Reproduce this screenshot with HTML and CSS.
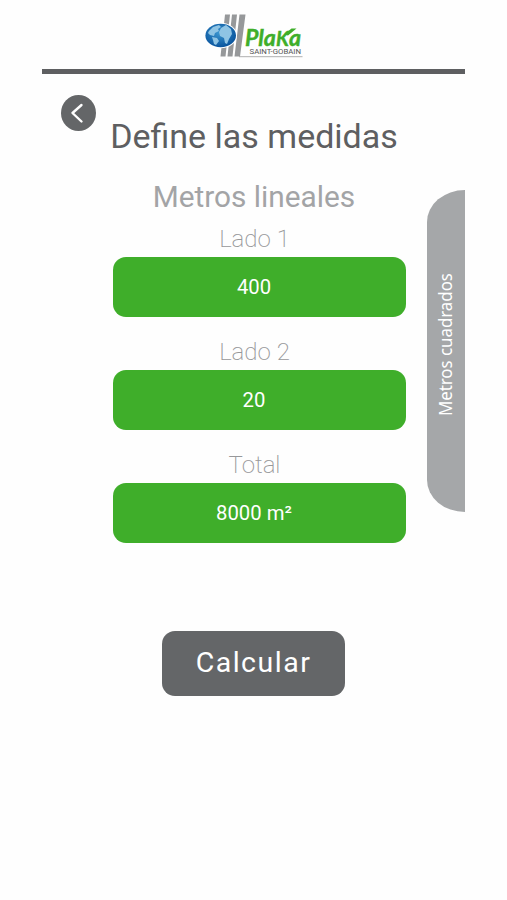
FILE: index.html
```
<!DOCTYPE html>
<html lang="es">
<head>
    <meta charset="UTF-8">
    <meta name="viewport" content="width=device-width, initial-scale=1.0">
    <title>Define las medidas</title>
    <link rel="stylesheet" href="styles.css">
</head>
<body>
<div class="app">
    <header class="header">
        <svg class="logo" width="100" height="46" viewBox="0 0 100 46">
            <defs>
                <radialGradient id="globe" cx="45%" cy="40%" r="60%">
                    <stop offset="0" stop-color="#3b95cf"/>
                    <stop offset="1" stop-color="#09549d"/>
                </radialGradient>
            </defs>
            <path class="bar" d="M20 1.5h5l-4.5 42h-5zM27 1.5h5l-4.5 42h-5zM34.5 1.5h6l-5.5 42h-5.500z"/>
            <ellipse cx="15.7" cy="22.5" rx="16.3" ry="12.8" fill="#fff"/>
            <ellipse cx="15.7" cy="22.5" rx="15.3" ry="11.8" fill="url(#globe)"/>
            <path class="land" d="M4 18l4-4 6-2 2 2-3 2 1 2-4 2-1 3-4-1-2-2zM7 24l5 1 2 3-3 4-2-1-1-4zM16 15l5-3 5 4 1 5-3 5-2 5-2-1-1-5-4-2-1-4z"/>
            <text class="logo-name" x="40" y="32.5" textLength="56" lengthAdjust="spacingAndGlyphs">Pla<tspan class="logo-k">K</tspan>a</text>
            <path d="M79 21.5l7.500-6h5l-8.500 7z" fill="#3fae2a"/>
            <text class="logo-sub" x="44.5" y="41.3" textLength="51.5" lengthAdjust="spacingAndGlyphs">SAINT-GOBAIN</text>
            <path d="M34 43.7h63.5" stroke="#999" stroke-width=".8"/>
        </svg>
    </header>

    <main class="content">
        <button class="back-btn" aria-label="Volver">
            <svg width="35" height="36" viewBox="0 0 35 36">
                <path d="M20.5 10l-9 8 9 8.5" fill="none" stroke="#fff" stroke-width="2.4" stroke-linecap="round" stroke-linejoin="round"/>
            </svg>
        </button>

        <!-- Formulario de medidas -->
        <div class="form">
            <h1>Define las medidas</h1>
            <h2>Metros lineales</h2>
            <div class="form-group">
                <label>Lado 1</label>
                <div class="field">400</div>
            </div>
            <div class="form-group">
                <label>Lado 2</label>
                <div class="field">20</div>
            </div>
            <div class="form-group">
                <label>Total</label>
                <div class="field">8000 m²</div>
            </div>
            <button class="calc-btn">Calcular</button>
        </div>

        <!-- Cambio de unidad -->
        <div class="tab"><span>Metros cuadrados</span></div>
    </main>
</div>
</body>
</html>
```
FILE: styles.css
```
body {
    font-family: Roboto, "Liberation Sans", sans-serif;
    margin: 0;
    background-color: #fefefe;
}
.app {
    width: 423px;
    margin-left: 42px;
}
.header {
    box-sizing: border-box;
    height: 74px;
    padding: 13px 0 0 163px;
    border-bottom: 5px solid #5e5f61;
}
.logo {
    display: block;
}
.bar {
    fill: #96989a;
}
.land {
    fill: #8fc4e4;
}
.logo-name {
    font: italic bold 23px Lato, sans-serif;
    fill: #3fae2a;
    stroke: #3fae2a;
    stroke-width: .4px;
}
.logo-k {
    font-size: 20px;
}
.logo-sub {
    font: 7px Roboto, sans-serif;
    fill: #555;
}
.content {
    display: grid;
    grid-template-columns: 71px 293px 38px;
    justify-content: start;
    align-items: start;
}
button {
    font-family: inherit;
    padding: 0;
    border: none;
    background-color: #646668;
    color: white;
    cursor: pointer;
}
.back-btn {
    width: 35px;
    height: 36px;
    margin: 21px 0 0 19px;
    border-radius: 50%;
}
.back-btn svg {
    display: block;
}
.form {
    display: flex;
    flex-direction: column;
    padding-top: 41px;
}
h1, h2 {
    margin: 0 0 0 -8px;
    padding-right: 3px;
    font-weight: normal;
    text-align: center;
    white-space: nowrap;
}
h1 {
    height: 61px;
    font-size: 34px;
    line-height: 42px;
    color: #5e5f61;
}
h2 {
    height: 49px;
    font-size: 29.8px;
    line-height: 41px;
    color: #a3a4a6;
}
.form-group {
    height: 113.2px;
}
label {
    display: block;
    height: 32px;
    padding-right: 10px;
    font-size: 24px;
    font-weight: 200;
    line-height: 28px;
    text-align: center;
    color: #97989a;
}
.field {
    box-sizing: border-box;
    height: 59.5px;
    padding-right: 11px;
    border-radius: 13px;
    background-color: #3fae2a;
    color: white;
    font-size: 20.3px;
    line-height: 60px;
    text-align: center;
}
.calc-btn {
    width: 183px;
    height: 65px;
    margin: 66px 0 0 49px;
    padding-bottom: 2px;
    border-radius: 13px;
    font-size: 28.5px;
    letter-spacing: 1.5px;
}
.tab {
    display: flex;
    box-sizing: border-box;
    width: 38px;
    height: 322px;
    margin: 115.5px 0 0 21px;
    padding: 0 3px 11px 0;
    justify-content: center;
    align-items: center;
    border-radius: 38px 0 0 38px / 32px 0 0 32px;
    background-color: #a5a7a9;
}
.tab span {
    writing-mode: vertical-rl;
    transform: rotate(180deg) scaleY(.91);
    font-family: "Noto Sans", sans-serif;
    font-size: 18.5px;
    color: white;
    white-space: nowrap;
}
```
